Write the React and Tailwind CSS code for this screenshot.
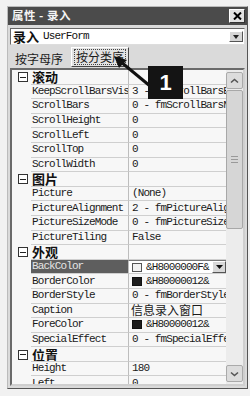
import React from "react";

const mono = { fontFamily: '"Liberation Mono", "DejaVu Sans Mono", monospace' };
const cjk = { fontFamily: '"Noto Sans CJK SC", "Noto Sans", sans-serif' };

const groups = [
  {
    name: "滚动",
    rows: [
      ["KeepScrollBarsVisible", "3 - fmScrollBarsBoth"],
      ["ScrollBars", "0 - fmScrollBarsNone"],
      ["ScrollHeight", "0"],
      ["ScrollLeft", "0"],
      ["ScrollTop", "0"],
      ["ScrollWidth", "0"],
    ],
  },
  {
    name: "图片",
    rows: [
      ["Picture", "(None)"],
      ["PictureAlignment", "2 - fmPictureAlignmentCenter"],
      ["PictureSizeMode", "0 - fmPictureSizeModeClip"],
      ["PictureTiling", "False"],
    ],
  },
  {
    name: "外观",
    rows: [
      ["BackColor", "&H8000000F&", "white", true],
      ["BorderColor", "&H80000012&", "black"],
      ["BorderStyle", "0 - fmBorderStyleNone"],
      ["Caption", "信息录入窗口", null, false, true],
      ["ForeColor", "&H80000012&", "black"],
      ["SpecialEffect", "0 - fmSpecialEffectFlat"],
    ],
  },
  {
    name: "位置",
    rows: [
      ["Height", "180"],
      ["Left", "0"],
    ],
  },
];

function Minus() {
  return (
    <div className="w-[10px] h-[10px] border border-[#333] flex items-center justify-center bg-white">
      <div className="w-[6px] h-px bg-[#222]" />
    </div>
  );
}

function CatRow({ name }) {
  return (
    <div className="flex h-[14.6px] shrink-0">
      <div className="w-[19px] flex items-center justify-end pr-[3px]">
        <Minus />
      </div>
      <div className="w-[97px] flex items-center border-b border-[#cfcfcf] overflow-hidden">
        <span className="text-[13px] font-bold text-[#111] leading-none pl-px" style={cjk}>{name}</span>
      </div>
      <div className="flex-1 border-l border-b border-[#bdbdbd] border-b-[#cfcfcf]" />
    </div>
  );
}

function PropRow({ row }) {
  const [name, value, swatch, selected, isCjk] = row;
  return (
    <div className="flex h-[14.6px] shrink-0">
      <div className="w-[19px]" />
      <div
        className={
          "w-[97px] flex items-center border-b border-[#cfcfcf] overflow-hidden whitespace-nowrap " +
          (selected ? "bg-[#5e5e5e] text-[#e4e4e4]" : "text-[#1a1a1a]")
        }
      >
        <span className="text-[11px] tracking-[-0.9px] leading-none pl-px" style={mono}>{name}</span>
      </div>
      <div
        className={
          "flex-1 flex items-center border-l border-b border-[#bdbdbd] border-b-[#cfcfcf] overflow-hidden whitespace-nowrap relative " +
          (selected ? "border-t border-t-[#777] bg-white" : "")
        }
      >
        {swatch && (
          <div
            className={
              "ml-[3px] w-[10px] h-[9px] shrink-0 border " +
              (swatch === "white" ? "bg-[#f2f2f2] border-[#555]" : "bg-[#1d1d1d] border-[#111]")
            }
          />
        )}
        {isCjk ? (
          <span className="text-[12px] leading-none pl-[2px] text-[#1a1a1a]" style={cjk}>{value}</span>
        ) : (
          <span
            className={"text-[11px] tracking-[-0.9px] leading-none text-[#1a1a1a] " + (swatch ? "pl-[4px]" : "pl-[3px]")}
            style={mono}
          >
            {value}
          </span>
        )}
        {selected && (
          <div className="absolute right-0 top-0 bottom-0 w-[14px] bg-[#d8d8d8] border-l border-t border-white border-r border-b border-r-[#555] border-b-[#555] flex items-center justify-center">
            <svg width="7" height="4" viewBox="0 0 7 4"><path d="M0 0h7L3.5 4z" fill="#111" /></svg>
          </div>
        )}
      </div>
    </div>
  );
}

function ScrollBtn({ down }) {
  return (
    <div className="h-[17px] shrink-0 bg-[#dcdcdc] border border-[#aaa] rounded-[2px] flex items-center justify-center">
      <svg width="9" height="6" viewBox="0 0 9 6">
        {down ? (
          <path d="M1 1.5l3.5 3 3.5-3" stroke="#555" strokeWidth="1.6" fill="none" />
        ) : (
          <path d="M1 4.5l3.5-3 3.5 3" stroke="#555" strokeWidth="1.6" fill="none" />
        )}
      </svg>
    </div>
  );
}

export default function App() {
  return (
    <div className="w-[250px] h-[396px] bg-[#f1f1f1] relative overflow-hidden">
      <div className="absolute left-[7px] top-[6px] w-[241px] h-[383px] bg-[#dadada] border border-[#bbb] border-r-[#555] border-b-[#555] flex flex-col">
        {/* title bar */}
        <div className="h-[18px] bg-[#4b4b4b] flex items-center justify-between pl-[4px] pr-[2px]">
          <span className="text-[11.5px] text-[#f4f4f4] font-bold leading-none tracking-[0.5px]" style={cjk}>属性 - 录入</span>
          <div className="w-[16px] h-[14px] bg-[#e2e2e2] border border-white border-r-[#333] border-b-[#333] flex items-center justify-center">
            <svg width="9" height="8" viewBox="0 0 9 8">
              <path d="M1 0.5l7 7M8 0.5l-7 7" stroke="#000" strokeWidth="2" />
            </svg>
          </div>
        </div>
        {/* combo */}
        <div className="mt-[3px] mx-[2px] h-[17px] bg-white border border-[#666] border-r-[#ddd] border-b-[#ddd] flex items-center relative">
          <span className="text-[13px] font-bold leading-none pl-[2px] text-[#111]" style={cjk}>录入</span>
          <span className="text-[11px] tracking-[-0.9px] leading-none pl-[4px] text-[#111]" style={mono}>UserForm</span>
          <div className="absolute right-[1px] top-[2px] w-[14px] h-[11px] bg-[#d6d6d6] border border-white border-r-[#555] border-b-[#555] flex items-center justify-center">
            <svg width="6" height="4" viewBox="0 0 6 4"><path d="M0 0h6L3 4z" fill="#222" /></svg>
          </div>
        </div>
        {/* tabs */}
        <div className="h-[23px] flex items-end pl-[5px] gap-[6px]">
          <div className="h-[19px] px-[2px] flex items-center">
            <span className="text-[12px] leading-none text-[#1a1a1a]" style={cjk}>按字母序</span>
          </div>
          <div className="h-[20px] w-[58px] mb-[1px] bg-[#e2e2e2] border border-white border-r-[#444] border-b-[#444] flex items-center justify-center">
            <span className="text-[12px] leading-none text-[#1a1a1a] border border-dotted border-[#444] px-px py-[1px]" style={cjk}>按分类序</span>
          </div>
        </div>
        {/* grid */}
        <div className="mx-[2px] h-[318px] bg-[#f7f7f7] border-2 border-[#6a6a6a] border-r-[#cfcfcf] border-b-[#cfcfcf] flex overflow-hidden">
          <div className="flex-1 flex flex-col overflow-hidden">
            {groups.map((g) => (
              <React.Fragment key={g.name}>
                <CatRow name={g.name} />
                {g.rows.map((r) => (
                  <PropRow key={r[0]} row={r} />
                ))}
              </React.Fragment>
            ))}
          </div>
          <div className="w-[17px] shrink-0 bg-[#ececec] flex flex-col pt-[2px] pb-[2px]">
            <ScrollBtn />
            <div className="h-[139px] shrink-0 bg-[#d6d6d6] border border-[#a8a8a8] rounded-[2px] flex flex-col items-center justify-center gap-[2px] mt-px">
              <div className="w-[7px] h-px bg-[#999]" />
              <div className="w-[7px] h-px bg-[#999]" />
              <div className="w-[7px] h-px bg-[#999]" />
            </div>
            <div className="flex-1" />
            <ScrollBtn down />
          </div>
        </div>
      </div>
      {/* annotation callout */}
      <svg className="absolute left-0 top-0" width="250" height="396" viewBox="0 0 250 396">
        <path d="M150 86 L121 62" stroke="#111" strokeWidth="3" />
        <path d="M114 56 L127 60 L119 68 Z" fill="#111" />
      </svg>
      <div className="absolute left-[148px] top-[66px] w-[35px] h-[33px] bg-[#141414] flex items-center justify-center">
        <span className="text-[22px] font-bold text-white leading-none" style={{ fontFamily: '"Liberation Sans", Arial, sans-serif' }}>1</span>
      </div>
    </div>
  );
}
